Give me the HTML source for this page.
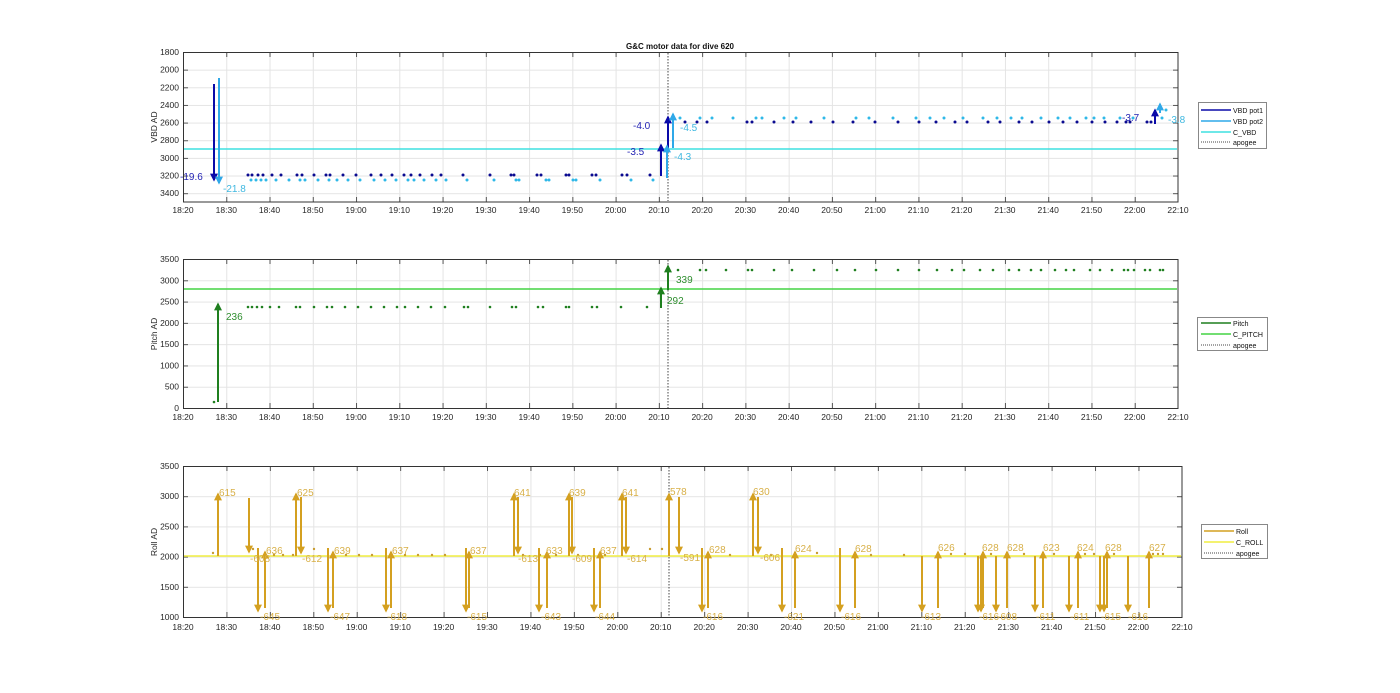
<!DOCTYPE html>
<html><head><meta charset="utf-8"><style>
html,body{margin:0;padding:0;background:#fff;}
svg{display:block;font-family:"Liberation Sans",sans-serif;}
.tk{font-size:8.5px;fill:#262626;}
.lg{font-size:7px;fill:#111;}
</style></head><body>
<svg width="1400" height="693" viewBox="0 0 1400 693" xmlns="http://www.w3.org/2000/svg">
<defs>
<pattern id="v1" x="183" y="0" width="43.26" height="693" patternUnits="userSpaceOnUse"><line x1="0.5" y1="0" x2="0.5" y2="693" stroke="#e4e4e4" stroke-width="1"/></pattern>
<pattern id="v3" x="183" y="0" width="43.43" height="693" patternUnits="userSpaceOnUse"><line x1="0.5" y1="0" x2="0.5" y2="693" stroke="#e4e4e4" stroke-width="1"/></pattern>
<pattern id="h1" x="0" y="52" width="1400" height="17.65" patternUnits="userSpaceOnUse"><line x1="0" y1="0.5" x2="1400" y2="0.5" stroke="#e4e4e4"/></pattern>
<pattern id="h2" x="0" y="259" width="1400" height="21.29" patternUnits="userSpaceOnUse"><line x1="0" y1="0.5" x2="1400" y2="0.5" stroke="#e4e4e4"/></pattern>
<pattern id="h3" x="0" y="466" width="1400" height="30.2" patternUnits="userSpaceOnUse"><line x1="0" y1="0.5" x2="1400" y2="0.5" stroke="#e4e4e4"/></pattern>
<pattern id="tv1" x="183" y="0" width="43.26" height="693" patternUnits="userSpaceOnUse"><line x1="0.5" y1="0" x2="0.5" y2="693" stroke="#555"/></pattern>
<pattern id="tv3" x="183" y="0" width="43.43" height="693" patternUnits="userSpaceOnUse"><line x1="0.5" y1="0" x2="0.5" y2="693" stroke="#555"/></pattern>
<pattern id="th1" x="0" y="52" width="1400" height="17.65" patternUnits="userSpaceOnUse"><line x1="0" y1="0.5" x2="1400" y2="0.5" stroke="#555"/></pattern>
<pattern id="th2" x="0" y="259" width="1400" height="21.29" patternUnits="userSpaceOnUse"><line x1="0" y1="0.5" x2="1400" y2="0.5" stroke="#555"/></pattern>
<pattern id="th3" x="0" y="466" width="1400" height="30.2" patternUnits="userSpaceOnUse"><line x1="0" y1="0.5" x2="1400" y2="0.5" stroke="#555"/></pattern>
<marker id="mb" viewBox="0 0 10 10" refX="8" refY="5" markerWidth="8" markerHeight="8" markerUnits="userSpaceOnUse" orient="auto"><path d="M0,0L10,5L0,10z" fill="#0a0aa8"/></marker>
<marker id="mc" viewBox="0 0 10 10" refX="8" refY="5" markerWidth="8" markerHeight="8" markerUnits="userSpaceOnUse" orient="auto"><path d="M0,0L10,5L0,10z" fill="#2fa8e8"/></marker>
<marker id="mg" viewBox="0 0 10 10" refX="8" refY="5" markerWidth="8" markerHeight="8" markerUnits="userSpaceOnUse" orient="auto"><path d="M0,0L10,5L0,10z" fill="#1f7f1f"/></marker>
<marker id="my" viewBox="0 0 10 10" refX="8" refY="5" markerWidth="8" markerHeight="8" markerUnits="userSpaceOnUse" orient="auto"><path d="M0,0L10,5L0,10z" fill="#d4a020"/></marker>
</defs>

<!-- ===== AXES 1 ===== -->
<rect x="183" y="52" width="995" height="150" fill="url(#v1)"/>
<rect x="183" y="52" width="995" height="150" fill="url(#h1)"/>
<rect x="183" y="197" width="995" height="5" fill="url(#tv1)"/>
<rect x="183" y="52" width="995" height="5" fill="url(#tv1)"/>
<rect x="183" y="52" width="5" height="150" fill="url(#th1)"/>
<rect x="1173" y="52" width="5" height="150" fill="url(#th1)"/>
<rect x="183.5" y="52.5" width="994.5" height="149.5" fill="none" stroke="#333"/>
<text x="680" y="49" text-anchor="middle" font-size="8px" font-weight="bold" fill="#111">G&amp;C motor data for dive 620</text>
<g class="tk" text-anchor="end">
<text x="179" y="55">1800</text><text x="179" y="72.6">2000</text><text x="179" y="90.3">2200</text><text x="179" y="107.9">2400</text><text x="179" y="125.6">2600</text><text x="179" y="143.2">2800</text><text x="179" y="160.9">3000</text><text x="179" y="178.5">3200</text><text x="179" y="196.2">3400</text>
</g>
<text transform="translate(157,127) rotate(-90)" text-anchor="middle" class="tk">VBD AD</text>
<g class="tk" text-anchor="middle">
<text x="183" y="213">18:20</text><text x="226.3" y="213">18:30</text><text x="269.5" y="213">18:40</text><text x="312.8" y="213">18:50</text><text x="356" y="213">19:00</text><text x="399.3" y="213">19:10</text><text x="442.6" y="213">19:20</text><text x="485.8" y="213">19:30</text><text x="529.1" y="213">19:40</text><text x="572.3" y="213">19:50</text><text x="615.6" y="213">20:00</text><text x="658.9" y="213">20:10</text><text x="702.1" y="213">20:20</text><text x="745.4" y="213">20:30</text><text x="788.6" y="213">20:40</text><text x="831.9" y="213">20:50</text><text x="875.2" y="213">21:00</text><text x="918.4" y="213">21:10</text><text x="961.7" y="213">21:20</text><text x="1004.9" y="213">21:30</text><text x="1048.2" y="213">21:40</text><text x="1091.5" y="213">21:50</text><text x="1134.7" y="213">22:00</text><text x="1178" y="213">22:10</text>
</g>
<line x1="184" y1="149" x2="1177" y2="149" stroke="#3fe0e0" stroke-width="1.5"/>
<line x1="668" y1="53" x2="668" y2="201" stroke="#444" stroke-dasharray="1.5,1.5"/>
<path d="M248 175h0M252 175h0M258 175h0M263 175h0M272 175h0M281 175h0M297 175h0M302 175h0M314 175h0M326 175h0M330 175h0M343 175h0M356 175h0M371 175h0M381 175h0M392 175h0M404 175h0M411 175h0M420 175h0M432 175h0M441 175h0M463 175h0M490 175h0M511 175h0M514 175h0M537 175h0M541 175h0M566 175h0M569 175h0M592 175h0M596 175h0M622 175h0M627 175h0M650 175h0M685 122h0M697 122h0M707 122h0M747 122h0M752 122h0M774 122h0M793 122h0M811 122h0M833 122h0M853 122h0M875 122h0M898 122h0M919 122h0M936 122h0M955 122h0M967 122h0M988 122h0M1000 122h0M1019 122h0M1032 122h0M1049 122h0M1063 122h0M1077 122h0M1092 122h0M1105 122h0M1117 122h0M1126 122h0M1130 122h0M1147 122h0M1151 122h0" stroke="#0a0a90" stroke-width="3" stroke-linecap="round"/>
<path d="M251 180h0M256 180h0M261 180h0M266 180h0M276 180h0M289 180h0M300 180h0M305 180h0M318 180h0M329 180h0M337 180h0M348 180h0M360 180h0M374 180h0M385 180h0M396 180h0M408 180h0M414 180h0M424 180h0M436 180h0M446 180h0M467 180h0M494 180h0M516 180h0M519 180h0M546 180h0M549 180h0M573 180h0M576 180h0M600 180h0M631 180h0M653 180h0M680 118h0M700 118h0M712 118h0M733 118h0M756 118h0M762 118h0M784 118h0M796 118h0M824 118h0M856 118h0M869 118h0M893 118h0M916 118h0M930 118h0M944 118h0M963 118h0M983 118h0M997 118h0M1011 118h0M1022 118h0M1041 118h0M1058 118h0M1070 118h0M1086 118h0M1094 118h0M1104 118h0M1120 118h0M1133 118h0M1162 118h0M1166 110h0" stroke="#2fb8e8" stroke-width="3" stroke-linecap="round"/>
<g stroke-width="2">
<line x1="214" y1="84" x2="214" y2="180" stroke="#0a0aa8" marker-end="url(#mb)"/>
<line x1="219" y1="78" x2="219" y2="183" stroke="#2fa8e8" marker-end="url(#mc)"/>
<line x1="661" y1="176" x2="661" y2="145" stroke="#0a0aa8" marker-end="url(#mb)"/>
<line x1="668" y1="149" x2="668" y2="117" stroke="#0a0aa8" marker-end="url(#mb)"/>
<line x1="667" y1="178" x2="667" y2="146" stroke="#2fa8e8" marker-end="url(#mc)"/>
<line x1="673" y1="148" x2="673" y2="114" stroke="#2fa8e8" marker-end="url(#mc)"/>
<line x1="1155" y1="124" x2="1155" y2="110" stroke="#0a0aa8" marker-end="url(#mb)"/>
<line x1="1160" y1="113" x2="1160" y2="104" stroke="#2fa8e8" marker-end="url(#mc)"/>
</g>
<g font-size="10px">
<text x="180" y="180" fill="#2424b4">-19.6</text>
<text x="223" y="192" fill="#3fb8e0">-21.8</text>
<text x="627" y="155" fill="#2424b4">-3.5</text>
<text x="633" y="129" fill="#2424b4">-4.0</text>
<text x="674" y="160" fill="#3fb8e0">-4.3</text>
<text x="680" y="131" fill="#3fb8e0">-4.5</text>
<text x="1122" y="121" fill="#2424b4">-3.7</text>
<text x="1168" y="123" fill="#3fb8e0">-3.8</text>
</g>
<rect x="1198.5" y="102.5" width="68" height="46" fill="#fff" stroke="#888"/>
<line x1="1201" y1="110" x2="1231" y2="110" stroke="#0a0aa8" stroke-width="1.5"/>
<line x1="1201" y1="121" x2="1231" y2="121" stroke="#2fa8e8" stroke-width="1.5"/>
<line x1="1201" y1="132" x2="1231" y2="132" stroke="#3fe0e0" stroke-width="1.5"/>
<line x1="1201" y1="142" x2="1231" y2="142" stroke="#444" stroke-dasharray="1,1"/>
<text class="lg" x="1233" y="113">VBD pot1</text><text class="lg" x="1233" y="124">VBD pot2</text><text class="lg" x="1233" y="135">C_VBD</text><text class="lg" x="1233" y="145">apogee</text>

<!-- ===== AXES 2 ===== -->
<rect x="183" y="259" width="995" height="149" fill="url(#v1)"/>
<rect x="183" y="259" width="995" height="149" fill="url(#h2)"/>
<rect x="183" y="403" width="995" height="5" fill="url(#tv1)"/>
<rect x="183" y="259" width="995" height="5" fill="url(#tv1)"/>
<rect x="183" y="259" width="5" height="149" fill="url(#th2)"/>
<rect x="1173" y="259" width="5" height="149" fill="url(#th2)"/>
<rect x="183.5" y="259.5" width="994.5" height="149" fill="none" stroke="#333"/>
<g class="tk" text-anchor="end">
<text x="179" y="262">3500</text><text x="179" y="283.3">3000</text><text x="179" y="304.6">2500</text><text x="179" y="325.9">2000</text><text x="179" y="347.1">1500</text><text x="179" y="368.4">1000</text><text x="179" y="389.7">500</text><text x="179" y="411">0</text>
</g>
<text transform="translate(157,334) rotate(-90)" text-anchor="middle" class="tk">Pitch AD</text>
<g class="tk" text-anchor="middle">
<text x="183" y="420">18:20</text><text x="226.3" y="420">18:30</text><text x="269.5" y="420">18:40</text><text x="312.8" y="420">18:50</text><text x="356" y="420">19:00</text><text x="399.3" y="420">19:10</text><text x="442.6" y="420">19:20</text><text x="485.8" y="420">19:30</text><text x="529.1" y="420">19:40</text><text x="572.3" y="420">19:50</text><text x="615.6" y="420">20:00</text><text x="658.9" y="420">20:10</text><text x="702.1" y="420">20:20</text><text x="745.4" y="420">20:30</text><text x="788.6" y="420">20:40</text><text x="831.9" y="420">20:50</text><text x="875.2" y="420">21:00</text><text x="918.4" y="420">21:10</text><text x="961.7" y="420">21:20</text><text x="1004.9" y="420">21:30</text><text x="1048.2" y="420">21:40</text><text x="1091.5" y="420">21:50</text><text x="1134.7" y="420">22:00</text><text x="1178" y="420">22:10</text>
</g>
<line x1="184" y1="289" x2="1177" y2="289" stroke="#44d444" stroke-width="1.5"/>
<line x1="668" y1="260" x2="668" y2="408" stroke="#444" stroke-dasharray="1.5,1.5"/>
<path d="M248 307h0M252 307h0M257 307h0M262 307h0M270 307h0M279 307h0M296 307h0M300 307h0M314 307h0M327 307h0M332 307h0M345 307h0M358 307h0M371 307h0M384 307h0M397 307h0M405 307h0M418 307h0M431 307h0M445 307h0M464 307h0M468 307h0M490 307h0M512 307h0M516 307h0M538 307h0M543 307h0M566 307h0M569 307h0M592 307h0M597 307h0M621 307h0M647 307h0M678 270h0M700 270h0M706 270h0M726 270h0M748 270h0M752 270h0M774 270h0M792 270h0M814 270h0M837 270h0M855 270h0M876 270h0M898 270h0M919 270h0M937 270h0M952 270h0M964 270h0M980 270h0M993 270h0M1009 270h0M1019 270h0M1031 270h0M1041 270h0M1055 270h0M1066 270h0M1074 270h0M1090 270h0M1100 270h0M1112 270h0M1124 270h0M1128 270h0M1134 270h0M1145 270h0M1150 270h0M1160 270h0M1163 270h0M214 402h0" stroke="#1f7f1f" stroke-width="2.6" stroke-linecap="round"/>
<g stroke-width="2" stroke="#1f7f1f">
<line x1="218" y1="402" x2="218" y2="304" marker-end="url(#mg)"/>
<line x1="661" y1="308" x2="661" y2="288" marker-end="url(#mg)"/>
<line x1="668" y1="290" x2="668" y2="266" marker-end="url(#mg)"/>
</g>
<g font-size="10px" fill="#2e8e2e">
<text x="226" y="320">236</text><text x="667" y="304">292</text><text x="676" y="283">339</text>
</g>
<rect x="1197.5" y="317.5" width="70" height="33" fill="#fff" stroke="#888"/>
<line x1="1201" y1="323" x2="1231" y2="323" stroke="#1f7f1f" stroke-width="1.5"/>
<line x1="1201" y1="334" x2="1231" y2="334" stroke="#44d444" stroke-width="1.5"/>
<line x1="1201" y1="345" x2="1231" y2="345" stroke="#444" stroke-dasharray="1,1"/>
<text class="lg" x="1233" y="326">Pitch</text><text class="lg" x="1233" y="337">C_PITCH</text><text class="lg" x="1233" y="348">apogee</text>

<!-- ===== AXES 3 ===== -->
<rect x="183" y="466" width="999" height="151" fill="url(#v3)"/>
<rect x="183" y="466" width="999" height="151" fill="url(#h3)"/>
<rect x="183" y="612" width="999" height="5" fill="url(#tv3)"/>
<rect x="183" y="466" width="999" height="5" fill="url(#tv3)"/>
<rect x="183" y="466" width="5" height="151" fill="url(#th3)"/>
<rect x="1177" y="466" width="5" height="151" fill="url(#th3)"/>
<rect x="183.5" y="466.5" width="998.5" height="151" fill="none" stroke="#333"/>
<g class="tk" text-anchor="end">
<text x="179" y="469">3500</text><text x="179" y="499.2">3000</text><text x="179" y="529.4">2500</text><text x="179" y="559.6">2000</text><text x="179" y="589.8">1500</text><text x="179" y="620">1000</text>
</g>
<text transform="translate(157,542) rotate(-90)" text-anchor="middle" class="tk">Roll AD</text>
<g class="tk" text-anchor="middle">
<text x="183" y="630">18:20</text><text x="226.4" y="630">18:30</text><text x="269.9" y="630">18:40</text><text x="313.3" y="630">18:50</text><text x="356.7" y="630">19:00</text><text x="400.2" y="630">19:10</text><text x="443.6" y="630">19:20</text><text x="487" y="630">19:30</text><text x="530.4" y="630">19:40</text><text x="573.9" y="630">19:50</text><text x="617.3" y="630">20:00</text><text x="660.7" y="630">20:10</text><text x="704.2" y="630">20:20</text><text x="747.6" y="630">20:30</text><text x="791" y="630">20:40</text><text x="834.4" y="630">20:50</text><text x="877.9" y="630">21:00</text><text x="921.3" y="630">21:10</text><text x="964.7" y="630">21:20</text><text x="1008.2" y="630">21:30</text><text x="1051.6" y="630">21:40</text><text x="1095" y="630">21:50</text><text x="1138.4" y="630">22:00</text><text x="1182" y="630">22:10</text>
</g>
<line x1="184" y1="556" x2="1181" y2="556" stroke="#f0ee40" stroke-width="1.5"/>
<line x1="669" y1="467" x2="669" y2="617" stroke="#444" stroke-dasharray="1.5,1.5"/>
<path d="M213 553h0M253 549h0M274 555h0M283 555h0M293 555h0M314 549h0M346 555h0M359 555h0M372 555h0M405 555h0M418 555h0M432 555h0M445 555h0M523 555h0M540 555h0M556 555h0M578 555h0M605 555h0M650 549h0M662 549h0M730 555h0M771 555h0M817 553h0M871 555h0M904 555h0M951 554h0M965 554h0M991 554h0M1024 554h0M1054 554h0M1085 554h0M1094 554h0M1114 554h0M1153 554h0M1158 554h0M1163 554h0" stroke="#c89c30" stroke-width="2.4" stroke-linecap="round"/>
<g stroke="#d4a020" stroke-width="2">
<line x1="218" y1="556" x2="218" y2="494" marker-end="url(#my)"/>
<line x1="249" y1="498" x2="249" y2="552" marker-end="url(#my)"/>
<line x1="258" y1="548" x2="258" y2="611" marker-end="url(#my)"/>
<line x1="265" y1="608" x2="265" y2="552" marker-end="url(#my)"/>
<line x1="296" y1="556" x2="296" y2="494" marker-end="url(#my)"/>
<line x1="301" y1="497" x2="301" y2="553" marker-end="url(#my)"/>
<line x1="328" y1="548" x2="328" y2="611" marker-end="url(#my)"/>
<line x1="333" y1="608" x2="333" y2="552" marker-end="url(#my)"/>
<line x1="386" y1="548" x2="386" y2="611" marker-end="url(#my)"/>
<line x1="391" y1="608" x2="391" y2="552" marker-end="url(#my)"/>
<line x1="466" y1="548" x2="466" y2="611" marker-end="url(#my)"/>
<line x1="469" y1="608" x2="469" y2="552" marker-end="url(#my)"/>
<line x1="514" y1="556" x2="514" y2="494" marker-end="url(#my)"/>
<line x1="518" y1="497" x2="518" y2="553" marker-end="url(#my)"/>
<line x1="539" y1="548" x2="539" y2="611" marker-end="url(#my)"/>
<line x1="547" y1="608" x2="547" y2="552" marker-end="url(#my)"/>
<line x1="569" y1="556" x2="569" y2="494" marker-end="url(#my)"/>
<line x1="572" y1="497" x2="572" y2="553" marker-end="url(#my)"/>
<line x1="594" y1="548" x2="594" y2="611" marker-end="url(#my)"/>
<line x1="600" y1="608" x2="600" y2="552" marker-end="url(#my)"/>
<line x1="622" y1="556" x2="622" y2="494" marker-end="url(#my)"/>
<line x1="626" y1="497" x2="626" y2="553" marker-end="url(#my)"/>
<line x1="669" y1="556" x2="669" y2="494" marker-end="url(#my)"/>
<line x1="679" y1="497" x2="679" y2="553" marker-end="url(#my)"/>
<line x1="702" y1="548" x2="702" y2="611" marker-end="url(#my)"/>
<line x1="708" y1="608" x2="708" y2="552" marker-end="url(#my)"/>
<line x1="753" y1="556" x2="753" y2="494" marker-end="url(#my)"/>
<line x1="758" y1="497" x2="758" y2="553" marker-end="url(#my)"/>
<line x1="782" y1="548" x2="782" y2="611" marker-end="url(#my)"/>
<line x1="795" y1="608" x2="795" y2="552" marker-end="url(#my)"/>
<line x1="840" y1="548" x2="840" y2="611" marker-end="url(#my)"/>
<line x1="855" y1="608" x2="855" y2="552" marker-end="url(#my)"/>
<line x1="922" y1="556" x2="922" y2="611" marker-end="url(#my)"/>
<line x1="938" y1="608" x2="938" y2="552" marker-end="url(#my)"/>
<line x1="978" y1="556" x2="978" y2="611" marker-end="url(#my)"/>
<line x1="981" y1="556" x2="981" y2="611" marker-end="url(#my)"/>
<line x1="983" y1="608" x2="983" y2="552" marker-end="url(#my)"/>
<line x1="996" y1="556" x2="996" y2="611" marker-end="url(#my)"/>
<line x1="1007" y1="608" x2="1007" y2="552" marker-end="url(#my)"/>
<line x1="1035" y1="556" x2="1035" y2="611" marker-end="url(#my)"/>
<line x1="1043" y1="608" x2="1043" y2="552" marker-end="url(#my)"/>
<line x1="1069" y1="556" x2="1069" y2="611" marker-end="url(#my)"/>
<line x1="1078" y1="608" x2="1078" y2="552" marker-end="url(#my)"/>
<line x1="1100" y1="556" x2="1100" y2="611" marker-end="url(#my)"/>
<line x1="1104" y1="556" x2="1104" y2="611" marker-end="url(#my)"/>
<line x1="1107" y1="608" x2="1107" y2="552" marker-end="url(#my)"/>
<line x1="1128" y1="556" x2="1128" y2="611" marker-end="url(#my)"/>
<line x1="1149" y1="608" x2="1149" y2="552" marker-end="url(#my)"/>
</g>
<g font-size="10px" fill="#d8b048">
<text x="219" y="496">615</text><text x="250" y="562">-608</text><text x="260" y="620">-645</text><text x="266" y="554">636</text>
<text x="297" y="496">625</text><text x="302" y="562">-612</text><text x="330" y="620">-647</text><text x="334" y="554">639</text>
<text x="387" y="620">-618</text><text x="392" y="554">637</text>
<text x="467" y="620">-615</text><text x="470" y="554">637</text>
<text x="514" y="496">641</text><text x="518" y="562">-613</text><text x="541" y="620">-643</text><text x="546" y="554">633</text>
<text x="569" y="496">639</text><text x="572" y="562">-609</text><text x="595" y="620">-644</text><text x="600" y="554">637</text>
<text x="622" y="496">641</text><text x="627" y="562">-614</text>
<text x="670" y="495">578</text><text x="680" y="561">-591</text><text x="703" y="620">-616</text><text x="709" y="553">628</text>
<text x="753" y="495">630</text><text x="760" y="561">-606</text><text x="784" y="620">-621</text><text x="795" y="552">624</text>
<text x="841" y="620">-616</text><text x="855" y="552">628</text>
<text x="921" y="620">-613</text><text x="938" y="551">626</text>
<text x="979" y="620">-616</text><text x="982" y="551">628</text><text x="997" y="620">-608</text><text x="1007" y="551">628</text>
<text x="1036" y="620">-611</text><text x="1043" y="551">623</text><text x="1070" y="620">-611</text><text x="1077" y="551">624</text>
<text x="1101" y="620">-615</text><text x="1105" y="551">628</text><text x="1128" y="620">-616</text><text x="1149" y="551">627</text>
</g>
<rect x="1201.5" y="524.5" width="66" height="34" fill="#fff" stroke="#888"/>
<line x1="1204" y1="531" x2="1234" y2="531" stroke="#d4a020" stroke-width="1.5"/>
<line x1="1204" y1="542" x2="1234" y2="542" stroke="#f0ee40" stroke-width="1.5"/>
<line x1="1204" y1="553" x2="1234" y2="553" stroke="#444" stroke-dasharray="1,1"/>
<text class="lg" x="1236" y="534">Roll</text><text class="lg" x="1236" y="545">C_ROLL</text><text class="lg" x="1236" y="556">apogee</text>
</svg>
</body></html>
